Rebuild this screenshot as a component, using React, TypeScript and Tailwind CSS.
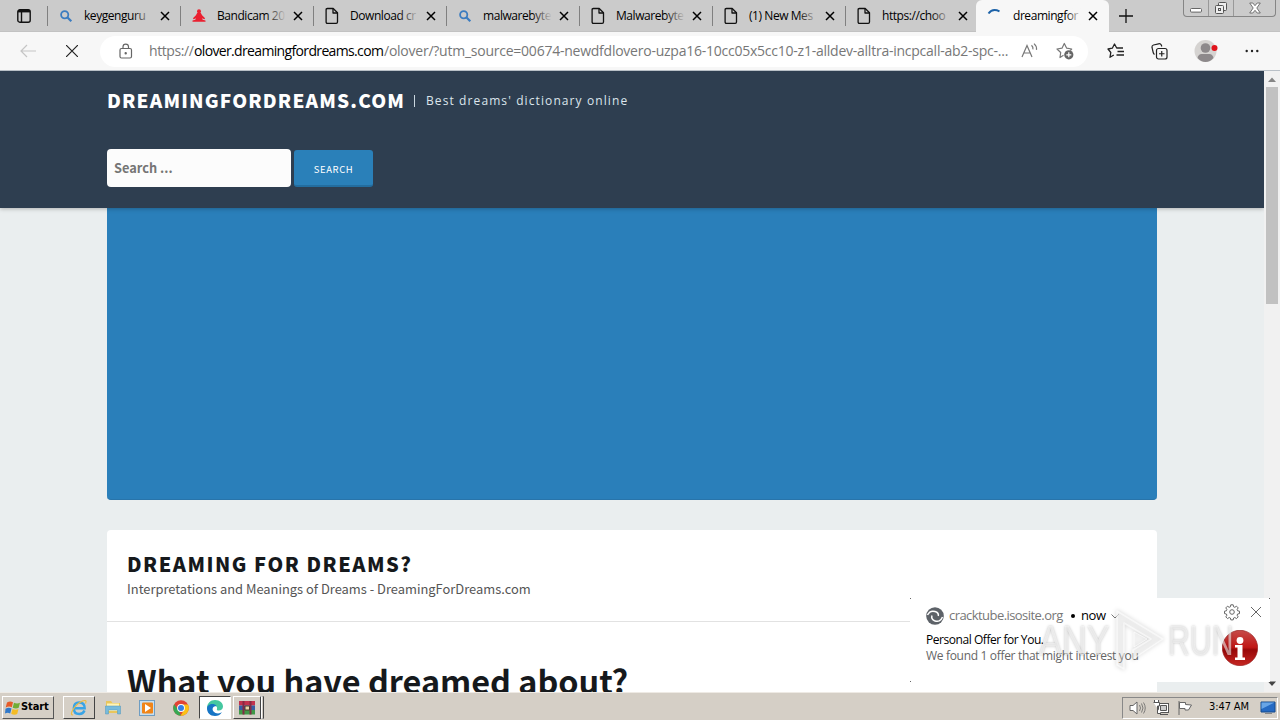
import React from 'react';
import clsx from 'clsx';

type TabIcon = 'search' | 'dancer' | 'page';

const tabs: { icon: TabIcon; title: string }[] = [
  { icon: 'search', title: 'keygenguru' },
  { icon: 'dancer', title: 'Bandicam 20' },
  { icon: 'page', title: 'Download cr' },
  { icon: 'search', title: 'malwarebyte' },
  { icon: 'page', title: 'Malwarebyte' },
  { icon: 'page', title: '(1) New Mes' },
  { icon: 'page', title: 'https://choo' },
];

function CloseIcon({ className = 'w-[10px] h-[10px]' }: { className?: string }) {
  return (
    <svg viewBox="0 0 10 10" className={clsx('shrink-0', className)} fill="none" stroke="currentColor" strokeWidth="1.5">
      <path d="M1 1l8 8M9 1l-8 8" />
    </svg>
  );
}

function Favicon({ icon }: { icon: TabIcon }) {
  if (icon === 'search') {
    return (
      <svg viewBox="0 0 16 16" className="w-4 h-4 shrink-0" fill="none" stroke="#3b7cc0">
        <circle cx="6.7" cy="6.7" r="3.6" strokeWidth="1.8" />
        <path d="M9.3 9.3l4 4" strokeWidth="2.2" />
      </svg>
    );
  }
  if (icon === 'dancer') {
    return (
      <svg viewBox="0 0 16 16" className="w-4 h-4 shrink-0" fill="#ea2030">
        <circle cx="8" cy="3.2" r="2" />
        <path d="M6.300 4.700h3.400l1.400 2.500 3 3-.8 1-2.300-.9.700 1.500 2.800.6v1.400H1.500v-1.400l2.800-.6.700-1.500-2.300.9-.8-1 3-3z" />
      </svg>
    );
  }
  return (
    <svg viewBox="0 0 16 18" className="w-4 h-[18px] shrink-0" fill="none" stroke="#111" strokeWidth="1.300" strokeLinejoin="round">
      <path d="M3.400 1.500h5.800l4.300 4.300v9.200q0 1.300-1.300 1.300H3.400q-1.300 0-1.300-1.300V2.800q0-1.300 1.300-1.300z" />
      <path d="M9 1.700V6h4.300" />
    </svg>
  );
}

function TabBar() {
  return (
    <div className="flex h-8 shrink-0 bg-[#cbcbcb] text-black border-b border-[#c2c2c2]">
      <div className="w-[47px] flex items-center justify-center shrink-0">
        <svg viewBox="0 0 14 14" className="w-[14px] h-[14px]" fill="none" stroke="#111" strokeWidth="1.4">
          <rect x=".8" y=".8" width="12.400" height="12.400" rx="2" />
          <path d="M1 2.200h12" strokeWidth="2.400" />
          <path d="M4.500 3v10" />
        </svg>
      </div>
      {tabs.map((tab, i) => (
        <div key={tab.title} className={clsx('flex items-center h-full shrink-0', i === 6 ? 'w-[131px]' : 'w-[133px]')}>
          <div className="w-px h-5 bg-[#808080] mr-[10px]" />
          <Favicon icon={tab.icon} />
          <div className="relative w-[69px] ml-[10px] mr-[7px] whitespace-nowrap text-[12px] leading-5 tracking-[-0.440px]">
            {tab.title}
            <div className="absolute right-0 top-0 h-5 w-5 bg-linear-to-r from-transparent to-[#cbcbcb]" />
          </div>
          <CloseIcon />
        </div>
      ))}
      <div className="flex items-center w-[133px] h-8 shrink-0 rounded-t-md bg-[#f7f7f7] pl-[10px]">
        <svg viewBox="0 0 16 16" className="w-4 h-4 shrink-0" fill="none" stroke="#1c62a8" strokeWidth="2">
          <path d="M2.500 5.500Q6.500-.2 13.500 3.300" />
        </svg>
        <div className="relative w-[69px] ml-[11px] mr-[6px] whitespace-nowrap text-[12px] leading-5 tracking-[-0.440px]">
          dreamingfor
          <div className="absolute right-0 top-0 h-5 w-4 bg-linear-to-r from-transparent to-[#f7f7f7]" />
        </div>
        <CloseIcon />
      </div>
      <svg viewBox="0 0 14 14" className="w-[14px] h-[14px] mt-[9px] ml-[10px]" stroke="#111" strokeWidth="1.300">
        <path d="M7 0v14M0 7h14" />
      </svg>
      <div className="flex ml-auto mr-1 h-[17px] border border-t-0 border-[#858585] rounded-b-[4px] text-[#666]">
        <div className="w-[25px] flex items-center justify-center border-r border-[#999]">
          <svg viewBox="0 0 12 5" className="w-3 h-[5px] mt-1" fill="#fff" stroke="#666">
            <rect x=".5" y=".5" width="11" height="3.600" rx="1" />
          </svg>
        </div>
        <div className="w-[25px] flex items-center justify-center border-r border-[#999]">
          <svg viewBox="0 0 14 14" className="w-[14px] h-[14px]" fill="#eee" stroke="#555">
            <rect x="4.500" y="1.500" width="8" height="8" rx="1" />
            <rect x="1.500" y="4.500" width="8" height="8" rx="1" />
            <rect x="4.500" y="7.500" width="2" height="2" />
          </svg>
        </div>
        <div className="w-[41px] flex items-center justify-center">
          <svg viewBox="0 0 12 12" className="w-3 h-3" fill="#fff" stroke="#666" strokeWidth=".9">
            <path d="M.7 1h3.100L6 3.700 8.200 1h3.100L7.800 6l3.500 5H8.200L6 8.300 3.800 11H.7l3.500-5z" />
          </svg>
        </div>
      </div>
    </div>
  );
}

function Toolbar() {
  return (
    <div className="flex items-center h-[39px] shrink-0 bg-[#f7f7f7] border-b border-[#b9c0c7] pl-5">
      <svg viewBox="0 0 16 14" className="w-4 h-[14px]" fill="none" stroke="#c5c5c5" strokeWidth="1.200">
        <path d="M16 7H1M7 1L1 7l6 6" />
      </svg>
      <svg viewBox="0 0 12 12" className="w-3 h-3 ml-[30px]" stroke="#222" strokeWidth="1.200">
        <path d="M0 0l12 12M12 0L0 12" />
      </svg>
      <div className="flex items-center w-[988px] h-[31px] ml-[22px] bg-white rounded-full pl-[19px] shrink-0">
        <svg viewBox="0 0 14 16" className="w-[14px] h-4 shrink-0" fill="none" stroke="#666" strokeWidth="1.200">
          <rect x="1" y="5.500" width="11.500" height="9.500" rx="1.500" />
          <path d="M4 5.500V3.800a2.700 2.700 0 0 1 5.500 0v1.700" />
          <circle cx="6.700" cy="10.300" r=".6" fill="#666" />
        </svg>
        <div className="flex w-[868px] ml-4 text-[14px] leading-5 text-[#777] whitespace-nowrap shrink-0">
          <span className="w-[45px] shrink-0 tracking-[-0.400px]">https://</span>
          <span className="w-[190px] shrink-0 text-black tracking-[-0.650px]">olover.dreamingfordreams.com</span>
          <span className="tracking-[-0.240px]">/olover/?utm_source=00674-newdfdlovero-uzpa16-10cc05x5cc10-z1-alldev-alltra-incpcall-ab2-spc-...</span>
        </div>
        <div className="flex items-center gap-[18px] ml-[4px]">
          <svg viewBox="0 0 17 16" className="w-[17px] h-4" fill="none" stroke="#777" strokeWidth="1.200">
            <path d="M1 14L6 2.500 11 14M2.800 10h6.400M10.500 2.200q1.900 1.700 1.400 4.200M13 .6q3 2.600 2.500 6.300" />
          </svg>
          <svg viewBox="0 0 18 18" className="w-[18px] h-[18px]" fill="none" stroke="#777" strokeWidth="1.200">
            <path d="M7.500 13.300L4 15.500l.7-5L1 7l5-.8L8.300 1.500l2.400 4.700 5 .8-1.400 1.500" strokeLinejoin="round" />
            <circle cx="12.800" cy="12.800" r="4.600" fill="#666" stroke="none" />
            <path d="M12.800 10.300v5M10.300 12.800h5" stroke="#fff" />
          </svg>
        </div>
      </div>
      <svg viewBox="0 0 18 16" className="w-[18px] h-4 ml-[19px]" fill="none" stroke="#222" strokeWidth="1.300">
        <path d="M6.800 12L3 14.300l.8-4.800L1 6l4.300-.8L7.500 1l2.200 4H16M10.500 8.500H17M9.500 12H17" strokeLinejoin="round" />
      </svg>
      <svg viewBox="0 0 17 17" className="w-[17px] h-[17px] ml-[26px]" fill="none" stroke="#222" strokeWidth="1.200">
        <path d="M3.500 11.500q-1-.7-1.300-2L1 4.500q-.3-2 1.500-2.500L7.500.8q2-.4 2.800 1.200l.5 1.500" />
        <rect x="5.500" y="5.500" width="10.500" height="10.500" rx="2" />
        <path d="M10.750 8v5.500M8 10.750h5.500" />
      </svg>
      <svg viewBox="0 0 24 24" className="w-6 h-6 ml-[26px]">
        <circle cx="11.500" cy="12" r="11" fill="#d5d3d1" />
        <circle cx="11.500" cy="9" r="4.800" fill="#8d898b" />
        <path d="M3.500 19q1-4 4-4h8q3 0 4 4-3.500 4-8 4t-8-4z" fill="#8d898b" />
        <circle cx="20.500" cy="9" r="3" fill="#e0131c" />
      </svg>
      <svg viewBox="0 0 14 4" className="w-[14px] h-1 ml-[27px]" fill="#222">
        <circle cx="1.700" cy="2" r="1.200" />
        <circle cx="7" cy="2" r="1.200" />
        <circle cx="12.300" cy="2" r="1.200" />
      </svg>
    </div>
  );
}

function SitePage() {
  return (
    <div className="w-[1264px] h-full overflow-hidden bg-[#eaeeef] font-['Noto_Sans_CJK_SC',sans-serif]">
      <header className="relative h-[137px] bg-[#2e3e50] pl-[107px] pt-[15px] shadow-[0_1px_4px_rgba(0,0,0,0.25)]">
        <div className="flex items-center h-[30px] text-white whitespace-nowrap">
          <h1 className="w-[307px] pb-[2px] text-[19px] leading-[28px] font-black tracking-[1.150px]">DREAMINGFORDREAMS.COM</h1>
          <div className="w-px h-3 bg-[#c9d6df]" />
          <p className="ml-[11px] text-[12px] text-[#dce5ec] tracking-[1.100px] font-['Open_Sans',sans-serif]">Best dreams' dictionary online</p>
        </div>
        <div className="flex mt-[33px] gap-[3px]">
          <div className="w-[184px] h-[38px] rounded-[4px] bg-[#fcfcfc] px-[7px] text-[12.800px] leading-[38px] font-bold text-[#757575]">
            Search ...
          </div>
          <button className="w-[79px] h-[37px] mt-px rounded-[3px] bg-[#2a80b9] border-b-2 border-[#236d9f] text-white text-[9.500px] tracking-[0.600px] pt-[3px]">
            SEARCH
          </button>
        </div>
      </header>
      <main className="w-[1050px] ml-[107px]">
        <div className="h-[292px] rounded-b-[4px] bg-[#2a7fba] border-b border-[#2874aa]" />
        <section className="mt-[30px] h-[200px] rounded-t-[4px] bg-white text-[#16191c] whitespace-nowrap">
          <div className="h-[92px] px-5 pt-[20px] border-b border-[#e2e2e2]">
            <h2 className="text-[20px] leading-[27px] font-black tracking-[1.500px]">DREAMING FOR DREAMS?</h2>
            <p className="text-[12.900px] leading-[24px] text-[#555]">Interpretations and Meanings of Dreams - DreamingForDreams.com</p>
          </div>
          <h2 className="pl-5 mt-[33px] text-[32.400px] leading-[50px] font-bold">What you have dreamed about?</h2>
        </section>
      </main>
    </div>
  );
}

function Scrollbar() {
  return (
    <div className="flex flex-col items-center w-4 h-full bg-[#f1f1f1]">
      <svg viewBox="0 0 16 16" className="w-4 h-4 shrink-0" fill="#858585">
        <path d="M4 11h8L8 6.500z" />
      </svg>
      <div className="w-3 h-[217px] bg-[#c1c1c1]" />
      <svg viewBox="0 0 16 16" className="w-4 h-4 mt-auto shrink-0" fill="#444">
        <path d="M4 5.500h8L8 10z" />
      </svg>
    </div>
  );
}

function Notification() {
  return (
    <div className="absolute left-[910px] top-[598px] w-[360px] h-[84px] bg-white">
      <div className="flex justify-between">
        <div className="w-px h-px bg-[#666]" />
        <div className="w-px h-px bg-[#666]" />
      </div>
      <div className="flex h-[82px]">
        <div className="w-[298px] pl-4 pt-[7px] whitespace-nowrap">
          <div className="flex items-center h-5 text-[13px]">
            <svg viewBox="0 0 18 18" className="w-[18px] h-[18px] mr-[5px]">
              <circle cx="9" cy="9" r="8.800" fill="#5d6268" />
              <path d="M1.500 8Q4 3 9 4.500q4 1.200 3.300 4.500M16.500 10Q14 16 8.500 13.700 4.800 12 6 8.500" fill="none" stroke="#fff" strokeWidth="1.500" />
            </svg>
            <span className="w-[122px] text-[#777] tracking-[-0.560px]">cracktube.isosite.org</span>
            <span className="w-1 h-1 rounded-full bg-black" />
            <span className="ml-[6px] text-black tracking-[-0.400px]">now</span>
            <svg viewBox="0 0 8 5" className="w-2 h-[5px] ml-[5px]" fill="none" stroke="#777">
              <path d="M.5.5L4 4 7.500.5" />
            </svg>
          </div>
          <div className="mt-[6px] text-[12px] leading-4 text-black tracking-[-0.450px]">Personal Offer for You.</div>
          <div className="text-[12px] leading-[15px] text-[#666] tracking-[-0.320px]">We found 1 offer that might interest you</div>
        </div>
        <div className="w-[62px] pl-4 pt-1">
          <div className="flex items-center gap-[11px] text-[#666]">
            <svg viewBox="0 0 16 16" className="w-4 h-[18px]" fill="none" stroke="currentColor">
              <path d="M6.800.8h2.400l.4 2 1.200.5 1.700-1.100 1.700 1.700-1.100 1.700.5 1.200 1.900.4v2.400l-1.900.4-.5 1.200 1.100 1.700-1.700 1.700-1.700-1.100-1.200.5-.4 1.900H6.800l-.4-1.900-1.200-.5-1.700 1.100-1.700-1.700 1.100-1.700-.5-1.200-1.900-.4V7.200l1.900-.4.5-1.200L1.800 3.900l1.700-1.700 1.700 1.100 1.200-.5z" />
              <circle cx="8" cy="8" r="2.300" />
            </svg>
            <svg viewBox="0 0 10 10" className="w-[10px] h-[10px]" stroke="currentColor">
              <path d="M0 0l10 10M10 0L0 10" />
            </svg>
          </div>
          <svg viewBox="0 0 36 36" className="w-9 h-9 mt-[9px] -ml-[2px]">
            <defs>
              <linearGradient id="redball" x1="0" y1="0" x2="0" y2="1">
                <stop offset="0" stopColor="#c64b49" />
                <stop offset=".48" stopColor="#c01716" />
                <stop offset=".55" stopColor="#980808" />
                <stop offset="1" stopColor="#c52622" />
              </linearGradient>
            </defs>
            <circle cx="18" cy="18" r="17.700" fill="url(#redball)" stroke="#8f1615" strokeWidth=".6" />
            <circle cx="18" cy="10.500" r="3.400" fill="#fff" />
            <path d="M13 15h7.500v12.500H23V30H13v-2.500h2.500v-10H13z" fill="#fff" />
          </svg>
        </div>
      </div>
      <div className="w-px h-px bg-[#666]" />
      <div className="absolute left-[129px] top-[10px] flex items-center w-[200px] h-[64px] font-['Liberation_Sans',sans-serif] text-[42px] text-white/55 [text-shadow:0_0_3px_rgba(0,0,0,0.25)]">
        <span className="w-[70px] origin-left scale-x-[0.820]">ANY</span>
        <svg viewBox="0 0 60 66" className="w-[60px] h-[66px] shrink-0 drop-shadow-[0_0_2px_rgba(0,0,0,0.3)]" fill="none" stroke="#fff" strokeOpacity=".6" strokeLinejoin="round">
          <path d="M8 4l46 28L24 52V43l18-11L15 16v46l-7-4z" fill="#fff" fillOpacity=".3" strokeWidth="1.500" />
          <path d="M25 25l13 7-13 8z" fill="#fff" fillOpacity=".2" />
        </svg>
        <span className="-ml-px origin-left scale-x-[0.720]">RUN</span>
      </div>
    </div>
  );
}

function Taskbar() {
  return (
    <div className="flex items-center h-7 shrink-0 bg-[#d5cfc6] border-t border-[#eeeae4] px-[2px] pt-[2px] font-['DejaVu_Sans_Condensed','DejaVu_Sans',sans-serif] text-black">
      <div className="flex items-center w-[52px] h-[23px] border border-t-white border-l-white border-b-[#555] border-r-[#555] pl-[2px] text-[11px] font-bold">
        <svg viewBox="0 0 16 16" className="w-4 h-4 shrink-0">
          <path d="M2 2.500q3-2 6-.3L6.800 7.300Q4 5.800.7 7.500z" fill="#e65b28" />
          <path d="M9 2.700q3 1.600 6 .1l-1.300 5q-2.700 1.500-6-.1z" fill="#72ad34" />
          <path d="M.5 8.700q3.200-1.700 6-.2l-1.300 5q-2.500-1.500-5.200 0z" fill="#2f78ca" />
          <path d="M7.500 9q3.100 1.500 6 .1l-1.300 5q-3 1.300-6-.3z" fill="#f4bc25" />
        </svg>
        <span className="tracking-[-0.100px]">Start</span>
      </div>
      <div className="flex items-center justify-center w-8 h-[23px] ml-[9px] border border-t-white border-l-white border-b-[#444] border-r-[#444]">
        <svg viewBox="0 0 18 18" className="w-[18px] h-[18px]" fill="none">
          <path d="M14.500 11.500q-1.300 3.500-5.200 3.500-5.500 0-5.500-5.800t5.500-5.700q5.400 0 5.400 5.800H5" stroke="#39a4e6" strokeWidth="2.400" />
          <path d="M3 16Q0 16 2.500 11.500 6 5 12.500 2q5-1.700 3 2.500" stroke="#edbb40" strokeWidth="1.200" />
        </svg>
      </div>
      <svg viewBox="0 0 18 18" className="w-[18px] h-[18px] ml-[9px]">
        <path d="M2 2h5l1.500 2H16v10H2z" fill="#e9c65c" />
        <path d="M3 4.500h12V12H3z" fill="#fff4b6" />
        <path d="M1.500 7h15v8h-3v-4h-9v4h-3z" fill="#77bbdc" stroke="#5196bd" strokeWidth=".5" />
      </svg>
      <svg viewBox="0 0 18 18" className="w-[18px] h-[18px] ml-4">
        <rect x="1.500" y="1.500" width="15" height="15" fill="#c7dff0" stroke="#6f9dc2" />
        <rect x="4" y="3.500" width="11" height="11" rx="1" fill="#f08519" />
        <path d="M7 5l6 4-6 4z" fill="#fff" />
      </svg>
      <svg viewBox="0 0 18 18" className="w-[18px] h-[18px] ml-4">
        <circle cx="9" cy="9" r="7.800" fill="#e14335" />
        <path d="M2.200 5.200L7 12l2 4.800A7.800 7.800 0 0 1 2.200 5.200z" fill="#36a853" />
        <path d="M9 5.500h7A7.800 7.800 0 0 1 8.500 16.800L12 11z" fill="#fbc116" />
        <circle cx="9" cy="9" r="3.900" fill="#fff" />
        <circle cx="9" cy="9" r="3" fill="#347fe5" />
      </svg>
      <div className="flex items-center justify-center w-[32px] h-[23px] ml-[9px] bg-white border border-t-[#444] border-l-[#444] border-b-white border-r-white">
        <svg viewBox="0 0 18 18" className="w-[18px] h-[18px]">
          <path d="M1 9.500C1 4 4.500 1 9 1c5 0 8 3 8 6.500 0 2.500-2 4-4.300 4-1.700 0-2.200-.7-1.700-1.500C12 7 7.500 5.500 5 7.500z" fill="#45c7a0" />
          <path d="M1 9.500C1 5 8 3.500 10.500 7 7 7 5.500 10 7.500 12.500S14 15 16 13c-2 3-4 4-7 4-5 0-8-3.500-8-7.500z" fill="#1675c5" />
        </svg>
      </div>
      <div className="flex items-center justify-center w-[28px] h-[23px] ml-[2px] border border-t-white border-l-white border-b-[#444] border-r-[#444]">
        <svg viewBox="0 0 18 18" className="w-[18px] h-[18px]">
          <path d="M1 2h16v4.500H1z" fill="#c3324d" />
          <path d="M1 6.500h16V11H1z" fill="#365da2" />
          <path d="M1 11h16v4.500H1z" fill="#3f9847" />
          <path d="M4.500 2h2v13.500h-2zM11.500 2h2v13.500h-2z" fill="#842a45" />
          <path d="M7 7h4.500v4H7z" fill="#e7d6a9" stroke="#54382d" />
        </svg>
      </div>
      <div className="w-[3px] h-[23px] border border-l-white border-y-[#aaa] border-r-[#444]" />
      <div className="flex items-center w-[156px] h-[22px] ml-auto border border-t-[#888] border-l-[#888] border-b-white border-r-white pl-[6px] text-[11px]">
        <svg viewBox="0 0 17 16" className="w-[17px] h-4" fill="#fff" stroke="#666">
          <path d="M1 5.500h3L8 2v12l-4-3.500H1z" />
          <path d="M10.500 5q2 3 0 6M12.500 3.500q3 4.500 0 9M14.500 2.500q3.500 5.500 0 11" fill="none" strokeWidth=".8" />
        </svg>
        <svg viewBox="0 0 16 16" className="w-4 h-4 ml-[7px]" fill="#fff" stroke="#555">
          <rect x="5.500" y="3.500" width="10" height="9" />
          <path d="M7.500 5.500h6v5h-6z" fill="#ccc" />
          <path d="M7 14.500h8M1.500 0v2.500h4V0M.5 2.500h6V6h-2v7.500h3.500" />
        </svg>
        <svg viewBox="0 0 16 16" className="w-4 h-4 ml-2" fill="#fff" stroke="#666">
          <path d="M2 1v14M2.500 2.500h6v2l6 .5-3 5H8V8.500H2.500z" />
        </svg>
        <span className="ml-4 tracking-[-0.100px] whitespace-nowrap">3:47 AM</span>
        <svg viewBox="0 0 16 14" className="w-4 h-[14px] ml-auto mr-px shrink-0">
          <path d="M1 1h14v10H1z" fill="#256ac3" stroke="#174b8b" />
          <path d="M1.500 1.500h13L1.500 8z" fill="#68a5e6" />
          <path d="M5 12.500h7" stroke="#888" />
        </svg>
      </div>
    </div>
  );
}

export default function App() {
  return (
    <div className="relative flex flex-col w-[1280px] h-[720px] overflow-hidden font-['Open_Sans',sans-serif]">
      <TabBar />
      <Toolbar />
      <div className="flex h-[621px] shrink-0">
        <SitePage />
        <Scrollbar />
      </div>
      <Taskbar />
      <Notification />
    </div>
  );
}
